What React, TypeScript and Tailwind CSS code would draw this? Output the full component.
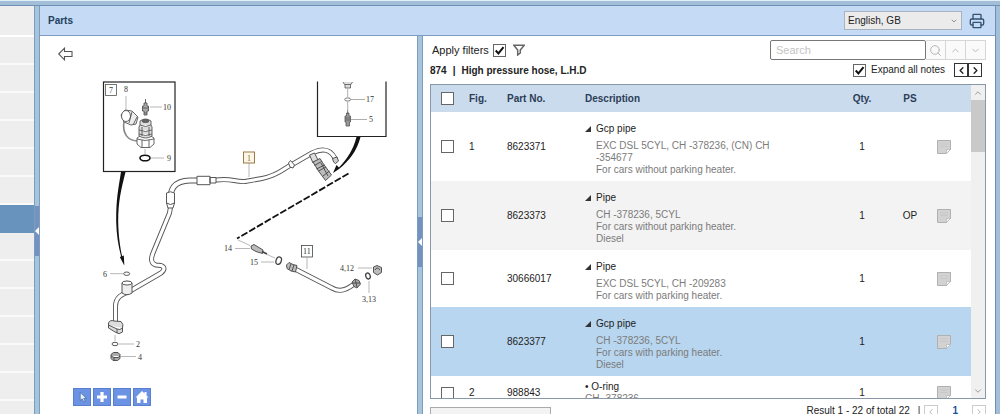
import { useState } from 'react';
import { ChevronDown, ChevronLeft, ChevronRight, ChevronUp, Printer, Search } from 'lucide-react';

interface Part {
  id: number;
  fig?: string;
  partNo: string;
  name: string;
  notes: string[];
  qty: number;
  ps?: string;
  child?: boolean;
}

const parts: Part[] = [
  {
    id: 1,
    fig: '1',
    partNo: '8623371',
    name: 'Gcp pipe',
    notes: ['EXC DSL 5CYL, CH -378236, (CN) CH', '-354677', 'For cars without parking heater.'],
    qty: 1,
  },
  {
    id: 2,
    partNo: '8623373',
    name: 'Pipe',
    notes: ['CH -378236, 5CYL', 'For cars without parking heater.', 'Diesel'],
    qty: 1,
    ps: 'OP',
  },
  {
    id: 3,
    partNo: '30666017',
    name: 'Pipe',
    notes: ['EXC DSL 5CYL, CH -209283', 'For cars with parking heater.'],
    qty: 1,
  },
  {
    id: 4,
    partNo: '8623377',
    name: 'Gcp pipe',
    notes: ['CH -378236, 5CYL', 'For cars with parking heater.', 'Diesel'],
    qty: 1,
  },
  { id: 5, fig: '2', partNo: '988843', name: 'O-ring', notes: ['CH -378236'], qty: 1, child: true },
];

const rowColor = (id: number) => {
  if (id === 4) return 'bg-[#b8d6ef]';
  return id === 2 ? 'bg-[#f3f3f3]' : 'bg-white';
};

const CheckBox = ({ label, checked = false }: { label: string; checked?: boolean }) => {
  const [on, setOn] = useState(checked);

  return (
    <span className="relative block size-[13px] shrink-0">
      <input
        type="checkbox"
        aria-label={label}
        checked={on}
        onChange={() => setOn(!on)}
        className="block size-[13px] appearance-none border border-[#666] bg-white"
      />
      {on && (
        <svg viewBox="0 0 12 12" className="pointer-events-none absolute inset-0 size-[13px]">
          <path d="M2.5 6 L5 8.7 L9.7 2.8" fill="none" stroke="#111" strokeWidth="1.8" />
        </svg>
      )}
    </span>
  );
};

const Splitter = ({ label, pad }: { label: string; pad: string }) => (
  <div className={`w-[6px] shrink-0 border-x border-[#7c9dbb] bg-[#a6c5dc] ${pad}`}>
    <button aria-label={label} className="flex h-[50px] w-full items-center justify-center bg-[#7392c2]">
      <svg viewBox="0 0 4 8" className="h-2 w-1">
        <path d="M4 0 V8 L0 4 Z" fill="#fff" />
      </svg>
    </button>
  </div>
);

const NoteIcon = () => (
  <svg viewBox="0 0 14 14" className="block size-[14px]">
    <path d="M.5 .5 H13.5 V9.5 L9.5 13.5 H.5 Z" fill="#d2d2d2" stroke="#b0b0b0" />
    <path d="M3 4 H11 M3 6.5 H11" stroke="#c8c8c8" />
    <path d="M13.5 9.5 H9.5 V13.5 Z" fill="#f7f7f7" stroke="#b5b5b5" strokeWidth=".7" />
  </svg>
);

// A tube is a dark stroke with a thinner white one on top
const Tube = ({ d, width = 5 }: { d: string; width?: number }) => (
  <g fill="none" strokeLinejoin="round">
    <path d={d} stroke="#555" strokeWidth={width} />
    <path d={d} stroke="#fff" strokeWidth={width - 1.8} />
  </g>
);

const Diagram = () => (
  <svg viewBox="40 64 377 320" className="block w-full" fontFamily="Liberation Serif, serif" fontSize="8" fill="#333">
    {/* inset 7 */}
    <rect x="103.5" y="82" width="71.5" height="89.5" fill="#fff" stroke="#222" strokeWidth="1.2" />
    <rect x="105.5" y="84.5" width="11" height="11" fill="#fff" stroke="#555" strokeWidth=".8" />
    <g fill="#fff" stroke="#555" strokeWidth=".9">
      <path d="M124 121 C122 134 128 141 138 141" fill="none" stroke="#888" strokeWidth="1.6" />
      <path d="M121 115 L125 110 L132 111 L138 117 L136 124 L131 125 L124 122 Z" fill="#eee" />
      <ellipse cx="126" cy="116" rx="4.5" ry="5.5" />
      <path d="M132 112 L129 123 M137 117 L133 125" />
      <path d="M145.5 99 V103 M144 103 H147 V106 H148.500 V111 H147 V115 H144 V111 H142.500 V106 H144 Z M142.500 108 H148.500 M144 113 H147" fill="#aaa" />
      <path d="M137 138 L141 135.500 H150 L154 138 V144 L150 147.500 H141 L137 144 Z M142 140 V147 M149 140 V147 M137 139 Q145 142 154 139" />
      <path d="M140 121 Q145.500 117 151 121 V125 L152 127 V136 Q145.500 140 139 136 V127 L140 125 Z" fill="#ddd" />
      <path d="M140 125 Q145.500 128 151 125 M139 130 Q145.500 133 152 130 M139 134 Q145.500 137 152 134 M142 127 V136 M149 127 V136" />
      <ellipse cx="145.500" cy="121" rx="3.500" ry="1.500" fill="#666" />
    </g>
    <ellipse cx="145" cy="158" rx="5" ry="2.8" fill="none" stroke="#111" strokeWidth="1.6" />
    <path d="M126 96 V110 M150 107 H162 M151 158 H164 M145 149 V154" stroke="#999" strokeWidth=".7" />
    <path d="M121 172 H125.500 C121 190 118.200 201 118.200 222 C118.500 238 120.500 249 122.500 258 L121.500 258 C118.500 247 116.500 235 116.200 222 C116 201 118 190 121 172 Z" fill="#111" />
    <path d="M119.800 257 L123.800 255.500 L124.300 265.500 Z" fill="#111" />

    {/* inset 17 / 5 */}
    <path d="M317.500 81.500 V136.500 H386 V81.500" fill="none" stroke="#222" strokeWidth="1.2" />
    <g stroke="#555" strokeWidth=".8" fill="#ddd">
      <path d="M343 82 L344.500 84.500 H351 L352.500 82 M345 84.500 V88 H350.500 V84.500" />
      <ellipse cx="347.700" cy="99.500" rx="3" ry="1.600" fill="#fff" />
      <path d="M347.700 110 V114 M346.500 113 H349 V116 H350.500 V122 H349.500 V126 H346 V122 H345 V116 H346.500 Z M345 118 H350.500 M345 120 H350.500" fill="#999" />
      <path d="M347.700 89 V97 M347.700 102 V110 M351 99.500 H365 M351 119.500 H367" stroke="#999" />
    </g>

    {/* main pipe */}
    <Tube width={6} d="M170.500 201 C170 190 173 181 190 180.500 H197" />
    <Tube d="M216 180 C233 178 233 182 245 181.500 L262 178.500 C280 175 285 167 293 164 L312 153 C324 147 331 150 335.500 159" />
    <Tube d="M170.500 207 L169.500 213 L153 253 Q149 263 156 265 L161 265.500 Q167 268 161 273 L130 291 C120 295 115.700 298 115.500 306 V322" />
    <g fill="#fff" stroke="#444" strokeWidth=".9">
      <path d="M197 176.300 H210 V184.700 H197 Z M210 177.500 H216 V183 H210 Z" />
      <path d="M166.500 193 Q170.500 190.500 174.500 193 V203 L173 208 H168 L166.500 203 Z M166.500 203 Q170.500 206 174.500 203" />
      <path d="M288.500 163 L290.500 160.500 L294.500 165 L293 168 L290 167 Z" />
      <path d="M332.500 158.500 L337 157 L338.500 161 L335.500 163.500 L333.500 162 Z" fill="#ccc" />
      <path d="M309.500 155 L314.500 153 L318 160 L313 163 Z" fill="#ddd" />
      <path d="M313 162 L320 158.500 L323.500 164 L331.500 175 L325.500 180.500 L318.500 171 Z" fill="#bbb" />
      <path d="M314.500 165.500 L321.500 161.500 M316.500 169 L324.500 165 M318.500 171 L326 167 M323 176 L329.500 171 M321 163 L328 176" />
      <path d="M122 283 Q127 279.500 132 283 V293 Q127 296.500 122 293 Z" fill="#eee" />
      <ellipse cx="127" cy="283" rx="5" ry="2" />
      <path d="M108.500 323 Q110 319.500 114 321 L121 321.500 Q124 324 122.500 328 V332 Q119 335 116 332.500 L108.500 328 Z M108.500 325 L117 329 Q120 330.500 122.500 328 M117 329 V333" fill="#ddd" />
      <ellipse cx="126.700" cy="273.700" rx="3" ry="1.700" />
      <ellipse cx="115" cy="344" rx="3" ry="1.700" />
      <path d="M111 354.500 L113.500 352.500 H118 L120 354.500 V358.500 L117.500 360.500 H113 L111 358.500 Z M111 356 L114 357.500 H118 L120 356 M114 357.500 V360" fill="#aaa" />
      <path d="M110 273.700 H123 M115 335 V341 M119 344 H134 M121 356.500 H136 M249 163 V177" stroke="#999" strokeWidth=".7" />
    </g>
    <path d="M356.500 137 H360.500 C357 151 349 161 339 169 L333 173 L336.500 165 L339 167.500 C348 158 353 150 356.500 137 Z" fill="#111" />
    <path d="M348.500 173.500 L237 238.500" stroke="#111" strokeWidth="1.8" strokeDasharray="7 2" />

    {/* lower hose */}
    <Tube d="M293 268 L332 288 C342 294 350 287 357 282" />
    <g fill="#fff" stroke="#444" strokeWidth=".9">
      <path d="M251 246 L254 244.500 L263 250 L262.500 253.500 L256 251.500 L251.500 249 Z" fill="#bbb" />
      <path d="M262 251.500 L267 254" strokeWidth="1.8" />
      <ellipse cx="278.700" cy="260.700" rx="2.600" ry="3.800" transform="rotate(20 278.700 260.700)" strokeWidth="1.3" />
      <path d="M286.500 265 L289 262.500 L293 264.500 L297 265.500 L295.500 272 L291 271 L287 268.500 Z M291 264 L289 269.500 M294 265 L292 271" fill="#bbb" />
      <path d="M352 282 L355 279 L359 280.500 L360.500 284 L357 288 L354 286.500 Z M355 279 L357 287 M352.500 283 L360 283" fill="#aaa" />
      <ellipse cx="368" cy="276" rx="2.200" ry="3" transform="rotate(-20 368 276)" strokeWidth="1.300" />
      <path d="M373.500 267 L377 265.500 L381.500 267.500 V272.500 L377.500 275 L373.500 272.500 Z M375 270 Q377 266 380 270" fill="#bbb" />
      <path d="M238 240 L250 245.500 M267 254.500 L275 258 M235 248.500 H250 M261 262 H274 M307 258 V269 M358 268 H372 M369 281 V293" stroke="#999" strokeWidth=".7" />
    </g>
    <rect x="243.500" y="152" width="11" height="11" fill="#fdf6e6" stroke="#9a7a48" />
    <rect x="301.500" y="245.500" width="11" height="11.500" fill="#fff" stroke="#444" strokeWidth=".8" />

    <text x="109" y="93">7</text>
    <text x="124" y="92">8</text>
    <text x="163" y="110">10</text>
    <text x="167" y="161">9</text>
    <text x="366" y="102">17</text>
    <text x="369" y="122">5</text>
    <text x="247" y="160.500" fill="#8a6a38">1</text>
    <text x="224" y="251">14</text>
    <text x="250" y="265">15</text>
    <text x="303" y="254">11</text>
    <text x="340" y="271">4,12</text>
    <text x="362" y="302">3,13</text>
    <text x="103" y="277">6</text>
    <text x="136" y="347">2</text>
    <text x="138" y="359.500">4</text>
  </svg>
);

const Sidebar = () => (
  <nav aria-label="Sections" className="w-[34px] shrink-0 overflow-hidden bg-[#eeeeef]">
    <div className="h-[31px] border-b-2 border-white" />
    {Array.from({ length: 14 }, (_, i) => (
      <div key={i} className={`h-7 border-b-2 ${i === 6 ? 'border-[#6893bd] bg-[#6893bd]' : 'border-[#fafafa]'}`} />
    ))}
  </nav>
);

const toolButton = 'flex size-[18px] items-center justify-center border border-[#5a7fd0] bg-[#6c93e3]';

const DiagramPanel = () => (
  <section className="flex min-w-0 flex-[377] flex-col bg-white pt-[11px]">
    <button aria-label="Back" className="ml-[18px] h-[14px] w-[15px] self-start">
      <svg viewBox="0 0 15 14" className="h-[14px] w-[15px]">
        <path d="M.7 7 L6.500 1.200 V4.500 H14 V9.500 H6.500 V12.800 Z" fill="#fff" stroke="#555" strokeWidth="1.100" />
      </svg>
    </button>
    <div className="mt-[3px]">
      <Diagram />
    </div>
    <div className="mt-1 flex gap-[2px] pl-[33px]">
      <button aria-label="Select" className={toolButton}>
        <svg viewBox="0 0 18 18" className="size-4">
          <path d="M7 4 V13 L9.200 11 L11 14.500 L12.500 13.700 L11 10.500 H14 Z" fill="#e8f2ff" stroke="#42689b" strokeWidth=".8" />
        </svg>
      </button>
      <button aria-label="Zoom in" className={toolButton}>
        <svg viewBox="0 0 12 12" className="size-3">
          <path d="M6 1 V11 M1 6 H11" stroke="#fff" strokeWidth="3.200" />
        </svg>
      </button>
      <button aria-label="Zoom out" className={toolButton}>
        <svg viewBox="0 0 12 12" className="size-3">
          <path d="M1.500 6 H10.500" stroke="#fff" strokeWidth="3" />
        </svg>
      </button>
      <button aria-label="Reset view" className={toolButton}>
        <svg viewBox="0 0 14 14" className="size-[14px]">
          <path d="M7 1 L9.500 3.500 V2 H11.500 V5.500 L13.500 7.500 H12 V13 H8.500 V9.500 H5.500 V13 H2 V7.500 H.5 Z" fill="#fff" />
        </svg>
      </button>
    </div>
  </section>
);

const PartsTable = () => (
  <table className="w-full table-fixed border-collapse">
    <colgroup>
      <col className="w-[38px]" />
      <col className="w-[38px]" />
      <col className="w-[78px]" />
      <col />
      <col className="w-[42px]" />
      <col className="w-[54px]" />
      <col className="w-[34px]" />
    </colgroup>
    <thead>
      <tr className="h-[27px] bg-[#cbdbee] text-left text-[#2c3e57]">
        <th className="pl-[10px]">
          <CheckBox label="Select all" />
        </th>
        <th>Fig.</th>
        <th>Part No.</th>
        <th>Description</th>
        <th className="text-center">Qty.</th>
        <th className="text-center">PS</th>
        <th aria-label="Notes" />
      </tr>
    </thead>
    <tbody>
      {parts.map((part) => (
        <tr key={part.id} className={rowColor(part.id)}>
          <td className="pl-[10px]">
            <CheckBox label={`Select ${part.partNo}`} />
          </td>
          <td>{part.fig}</td>
          <td>{part.partNo}</td>
          <td className={part.child ? 'py-[5px]' : 'pt-[11px] pb-[5px]'}>
            {part.child ? (
              <div>• {part.name}</div>
            ) : (
              <button className="flex items-center gap-[5px]">
                <svg viewBox="0 0 6 6" className="size-[6px]">
                  <path d="M6 0 V6 H0 Z" fill="#333" />
                </svg>
                {part.name}
              </button>
            )}
            <div className={part.child ? 'text-[#7b7b7b]' : 'mt-[5px] pl-[11px] text-[#7b7b7b]'}>
              {part.notes.map((note) => (
                <p key={note}>{note}</p>
              ))}
            </div>
          </td>
          <td className="text-center">{part.qty}</td>
          <td className="text-center">{part.ps}</td>
          <td>
            <button aria-label="Add note" className="block">
              <NoteIcon />
            </button>
          </td>
        </tr>
      ))}
    </tbody>
  </table>
);

const searchButton = 'flex h-5 w-5 items-center justify-center border border-l-0 border-[#d6d6d6] bg-[#fafafa] text-[#b4b4b4]';
const stepButton = 'flex h-[14px] w-[14px] items-center justify-center border border-[#333]';

const PartsPanel = () => {
  const [query, setQuery] = useState('');

  return (
    <section className="flex min-w-0 flex-[556] flex-col bg-white pr-[9px] pl-[7px]">
      <div className="flex items-center pt-1">
        <label className="flex items-center gap-1 pl-[2px] text-[11px]">
          Apply filters
          <CheckBox label="Apply filters" checked />
        </label>
        <button aria-label="Filter" className="ml-[7px]">
          <svg viewBox="0 0 12 12" className="size-3">
            <path d="M.8 1.200 H11.200 L7.300 6 V9 L4.700 11 V6 Z" fill="#fff" stroke="#666" strokeWidth="1.500" />
          </svg>
        </button>
        <input
          aria-label="Search"
          placeholder="Search"
          value={query}
          onChange={(e) => setQuery(e.target.value)}
          className="ml-auto h-5 w-[156px] rounded-[2px] border border-[#777] px-[5px] text-[11px] placeholder:text-[#c4c4c4]"
        />
        <button aria-label="Run search" className={searchButton}>
          <Search size={13} strokeWidth={1.8} />
        </button>
        <button aria-label="Previous match" className={searchButton}>
          <ChevronUp size={11} />
        </button>
        <button aria-label="Next match" className={searchButton}>
          <ChevronDown size={11} />
        </button>
      </div>
      <div className="flex h-6 items-center pb-1">
        <h2 className="flex gap-[6px] pt-[2px] font-bold">
          <span>874</span>
          <span>|</span>
          <span>High pressure hose, L.H.D</span>
        </h2>
        <label className="ml-auto flex items-center gap-[5px]">
          <CheckBox label="Expand all notes" checked />
          Expand all notes
        </label>
        <div className="mr-1 ml-[9px] flex">
          <button aria-label="Previous section" className={stepButton}>
            <ChevronLeft size={11} strokeWidth={3} />
          </button>
          <button aria-label="Next section" className={stepButton}>
            <ChevronRight size={11} strokeWidth={3} />
          </button>
        </div>
      </div>

      <div className="flex min-h-0 flex-1 overflow-hidden border border-[#8a97a6]">
        <div className="min-w-0 flex-1 overflow-hidden">
          <PartsTable />
        </div>
        <div className="flex w-[14px] shrink-0 flex-col items-center bg-[#f0f0f0] text-[#888]">
          <button aria-label="Scroll up" className="flex h-[15px] items-center">
            <ChevronUp size={10} />
          </button>
          <div className="h-[52px] w-full bg-[#c9c9c9]" />
          <button aria-label="Scroll down" className="mt-auto flex h-[15px] items-center">
            <ChevronDown size={10} />
          </button>
        </div>
      </div>

      <div className="flex h-[15px] items-start">
        <button aria-label="Actions" className="mt-2 h-5 w-[121px] shrink-0 border border-[#aaa] bg-[#f3f3f3]" />
        <p className="mt-[6px] ml-auto">Result 1 - 22 of total 22</p>
        <span className="mt-[6px] ml-2">|</span>
        <button aria-label="Previous page" className="mt-[6px] ml-1 flex size-[14px] shrink-0 items-center justify-center border border-[#ccc] text-[#aaa]">
          <ChevronLeft size={10} />
        </button>
        <a href="#page-1" className="mx-[14px] mt-[6px] font-bold text-[#1f4f9c]">
          1
        </a>
        <button aria-label="Next page" className="mt-[6px] flex size-[14px] shrink-0 items-center justify-center border border-[#ccc] text-[#aaa]">
          <ChevronRight size={10} />
        </button>
      </div>
    </section>
  );
};

const App = () => {
  const [language, setLanguage] = useState('en-GB');

  return (
    <div className="flex h-screen flex-col overflow-hidden bg-[#a3bed8] font-['Liberation_Sans',Arial,sans-serif] text-[10px] leading-3 text-[#222]">
      <div className="h-[6px] shrink-0 border-t border-b border-t-[#dff1f6] border-b-[#6f90b3]" />
      <div className="flex min-h-0 flex-1">
        <Sidebar />
        <Splitter label="Collapse sections" pad="pt-[200px]" />
        <div className="mr-1 flex min-w-0 flex-1 flex-col border-r border-[#6f90b3]">
          <header className="flex h-[30px] shrink-0 items-center border-b border-[#7f9cc4] bg-[#c5dbf5] pr-[10px] pl-2">
            <h1 className="font-bold text-[#22405f]">Parts</h1>
            <div className="relative ml-auto">
              <select
                aria-label="Language"
                value={language}
                onChange={(e) => setLanguage(e.target.value)}
                className="block h-[19px] w-[118px] appearance-none border border-[#a9b3bf] bg-[#ebebeb] pl-[3px]"
              >
                <option value="en-GB">English, GB</option>
                <option value="sv-SE">Svenska</option>
              </select>
              <ChevronDown size={8} className="pointer-events-none absolute top-[6px] right-1 text-[#666]" />
            </div>
            <button aria-label="Print" className="ml-[7px] text-[#35536f]">
              <Printer size={16} strokeWidth={2} />
            </button>
          </header>
          <main className="flex min-h-0 flex-1">
            <DiagramPanel />
            <Splitter label="Collapse diagram" pad="pt-[181px]" />
            <PartsPanel />
          </main>
        </div>
      </div>
    </div>
  );
};

export default App;
